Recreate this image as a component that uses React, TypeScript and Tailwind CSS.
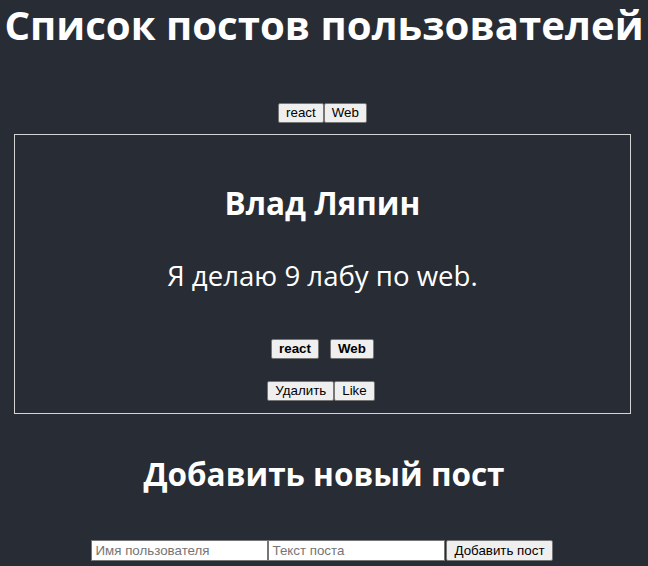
import React, { useState } from 'react';

type Post = { id: number; author: string; text: string; tags: string[] };

const btn =
  "bg-[#efefef] border border-[#767676] rounded-[2px] px-[7px] h-[20px] text-[13.33px] leading-[16px] text-black font-['Liberation_Sans',Arial,sans-serif]";

const field =
  "w-[177px] h-[21px] bg-white border border-[#767676] px-[3px] text-[13.33px] text-black placeholder:text-[#757575] font-['Liberation_Sans',Arial,sans-serif]";

export default function App() {
  const [posts] = useState<Post[]>([
    { id: 1, author: 'Влад Ляпин', text: 'Я делаю 9 лабу по web.', tags: ['react', 'Web'] },
  ]);

  return (
    <div className="min-h-screen bg-[#282c34] text-white text-center font-['Open_Sans','Noto_Sans',sans-serif]">
      <h1 className="text-[40.2px] font-bold leading-[50px]">Список постов пользователей</h1>

      {/* фильтр по тегам */}
      <div className="flex justify-center mt-[53px] pr-[3px]">
        <button className={btn}>react</button>
        <button className={btn}>Web</button>
      </div>

      {posts.map((p) => (
        <div key={p.id} className="ml-[14px] mr-[17px] mt-[11px] border border-[#d4d4d4] pt-[48px] pb-[12px]">
          <h2 className="text-[31.5px] font-bold leading-[40px]">{p.author}</h2>
          <p className="text-[27.6px] leading-[38px] mt-[33px]">{p.text}</p>
          <div className="flex justify-center gap-[11px] mt-[45px]">
            {p.tags.map((t) => (
              <button key={t} className={btn + ' font-bold'}>{t}</button>
            ))}
          </div>
          <div className="flex justify-center mt-[22px] pr-[3px]">
            <button className={btn}>Удалить</button>
            <button className={btn}>Like</button>
          </div>
        </div>
      ))}

      <h2 className="text-[31.5px] font-bold leading-[40px] mt-[40px]">Добавить новый пост</h2>

      <div className="flex justify-center items-center mt-[46px] pr-[4px]">
        <input placeholder="Имя пользователя" className={field} />
        <input placeholder="Текст поста" className={field} />
        <button className={btn + ' ml-[1px] h-[21px]'}>Добавить пост</button>
      </div>
    </div>
  );
}
